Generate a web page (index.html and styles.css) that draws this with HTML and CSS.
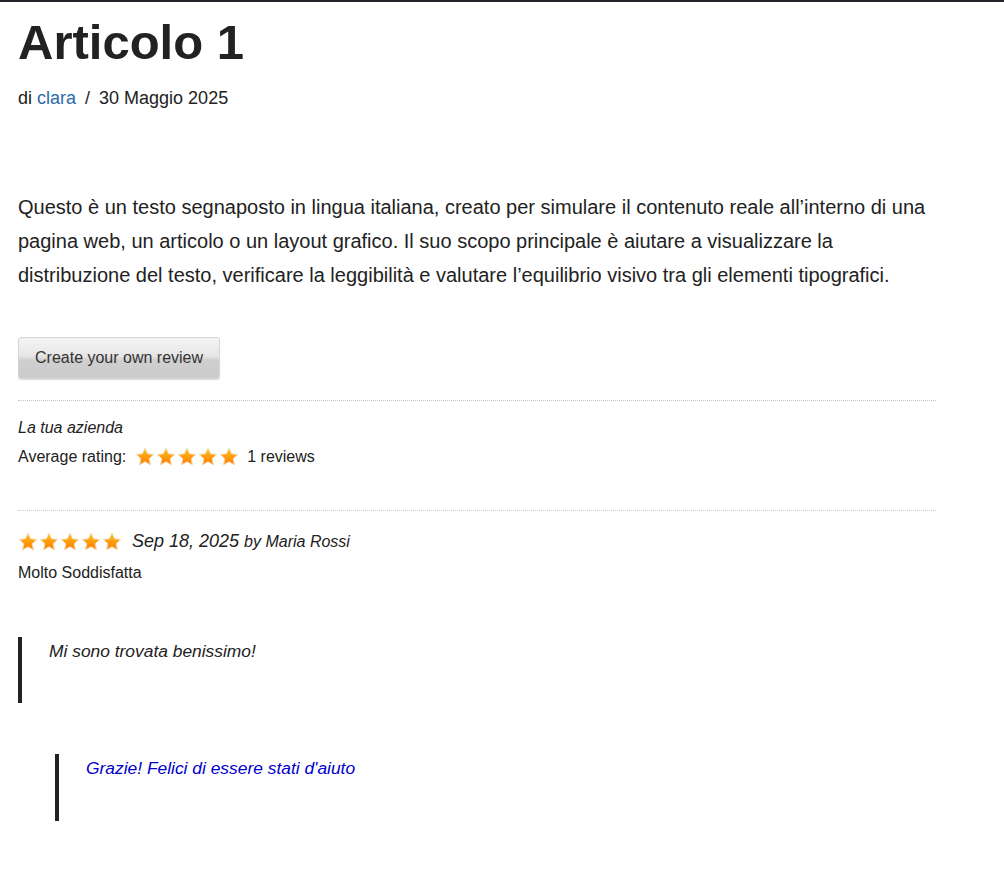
FILE: index.html
```html
<!DOCTYPE html>
<html lang="it">
<head>
<meta charset="utf-8">
<title>Articolo 1</title>
<link rel="stylesheet" href="styles.css">
</head>
<body>
<svg width="0" height="0" class="defs">
  <defs>
    <linearGradient id="sg" x1="0" y1="0" x2="0" y2="1">
      <stop offset="0" stop-color="#ffc21a"/>
      <stop offset="1" stop-color="#ff7a00"/>
    </linearGradient>
    <symbol id="star" viewBox="0 0 20 20">
      <path d="M10 1.2l2.6 5.6 6.1.7-4.5 4.2 1.2 6.1L10 14.8l-5.4 3 1.2-6.1L1.3 7.5l6.1-.7z" fill="url(#sg)" stroke="#f5d9b0" stroke-width="1"/>
    </symbol>
  </defs>
</svg>
<main class="page">
  <article class="post">
    <h1 class="title">Articolo 1</h1>
    <p class="meta">di <a href="#" class="author">clara</a><span class="sep">/</span>30 Maggio 2025</p>
    <p class="lead">Questo è un testo segnaposto in lingua italiana, creato per simulare il contenuto reale all’interno di una pagina web, un articolo o un layout grafico. Il suo scopo principale è aiutare a visualizzare la distribuzione del testo, verificare la leggibilità e valutare l’equilibrio visivo tra gli elementi tipografici.</p>
    <button class="btn" type="button">Create your own review</button>
    <section class="summary">
      <div class="company">La tua azienda</div>
      <div class="avg">
        <span>Average rating:</span>
        <span class="stars">
          <svg class="star"><use href="#star"/></svg><svg class="star"><use href="#star"/></svg><svg class="star"><use href="#star"/></svg><svg class="star"><use href="#star"/></svg><svg class="star"><use href="#star"/></svg>
        </span>
        <span>1 reviews</span>
      </div>
    </section>
    <section class="review">
      <div class="rhead">
        <span class="stars">
          <svg class="star"><use href="#star"/></svg><svg class="star"><use href="#star"/></svg><svg class="star"><use href="#star"/></svg><svg class="star"><use href="#star"/></svg><svg class="star"><use href="#star"/></svg>
        </span>
        <span class="rdate">Sep 18, 2025</span>
        <span class="rby">by Maria Rossi</span>
      </div>
      <div class="rtitle">Molto Soddisfatta</div>
      <blockquote class="quote">Mi sono trovata benissimo!</blockquote>
      <blockquote class="quote reply">Grazie! Felici di essere stati d'aiuto</blockquote>
    </section>
  </article>
</main>
</body>
</html>
```
FILE: styles.css
```css
html, body {
  margin: 0;
  padding: 0;
  background: #fff;
}
body {
  border-top: 2px solid #23252b;
  font-family: "Liberation Sans", Arial, sans-serif;
  color: #222;
}
.defs {
  position: absolute;
  width: 0;
  height: 0;
}
.page {
  padding: 0 68px 0 18px;
}
.post {
  width: 918px;
}
.title {
  margin: 10px 0 0;
  font-size: 49px;
  line-height: 60px;
  font-weight: 700;
  color: #222;
}
.meta {
  margin: 14px 0 0;
  font-size: 18px;
  line-height: 24px;
}
.author {
  color: #2a6aad;
  text-decoration: none;
}
.sep {
  margin: 0 9px;
}
.lead {
  margin: 80px 0 0;
  font-size: 20px;
  line-height: 34px;
  color: #222;
}
.btn {
  margin-top: 45px;
  height: 42px;
  padding: 0 16px;
  font-family: "Liberation Sans", Arial, sans-serif;
  font-size: 16px;
  color: #333;
  border: 1px solid #d6d6d6;
  border-radius: 3px;
  background: linear-gradient(#f4f4f4 0%, #e6e6e6 45%, #cfcfcf 55%, #cbcbcb 100%);
  box-shadow: 0 1px 1px rgba(0,0,0,0.15);
  display: block;
}
.summary {
  margin-top: 21px;
  border-top: 1px dotted #c4c4c4;
  padding-top: 17px;
  padding-bottom: 42px;
}
.company {
  font-style: italic;
  font-size: 16px;
  line-height: 20px;
}
.avg {
  margin-top: 8px;
  display: flex;
  align-items: center;
  font-size: 16px;
  line-height: 22px;
}
.stars {
  display: inline-flex;
  gap: 1px;
  margin: 0 8px 0 9px;
}
.star {
  width: 20px;
  height: 20px;
  display: block;
}
.review {
  border-top: 1px dotted #c4c4c4;
  padding-top: 20px;
}
.rhead {
  display: flex;
  align-items: center;
  font-style: italic;
}
.rhead .stars {
  margin: 0 10px 0 0;
}
.rdate {
  font-size: 18px;
  margin-right: 5px;
}
.rby {
  font-size: 16px;
}
.rtitle {
  margin-top: 11px;
  font-size: 16px;
  line-height: 20px;
}
.quote {
  margin: 54px 0 0;
  border-left: 4px solid #222;
  padding: 4px 0 0 27px;
  height: 62px;
  font-style: italic;
  font-size: 17.4px;
  line-height: 20px;
}
.reply {
  margin: 51px 0 0 37px;
  color: #0000cc;
  height: 63px;
}
```
